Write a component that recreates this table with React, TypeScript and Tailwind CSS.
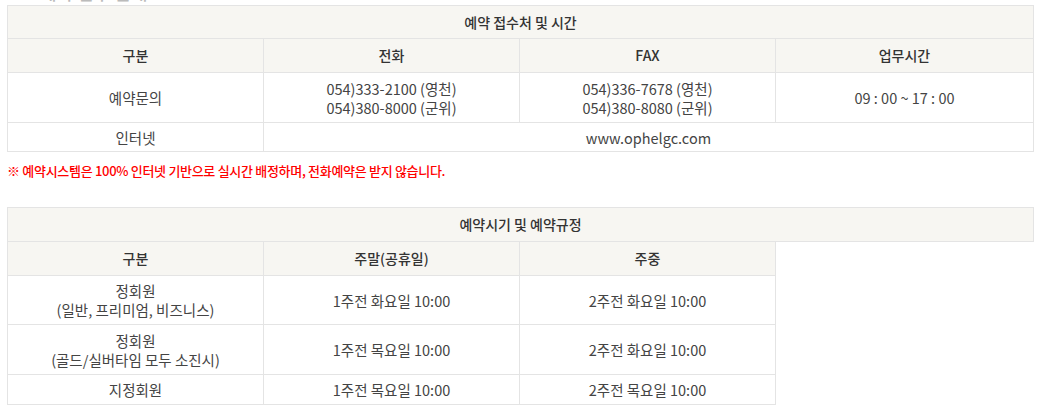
import React from "react";

const font = { fontFamily: '"Noto Sans CJK KR", "Noto Sans", sans-serif' };

const th = "border border-[#e4e4e4] bg-[#f7f6f2] text-[14px] font-medium text-[#333] text-center align-middle";
const td = "border border-[#e4e4e4] bg-white text-[14.5px] text-[#444] text-center align-middle leading-[19px]";

export default function App() {
  return (
    <div className="w-[1037px] h-[410px] overflow-hidden bg-white" style={font}>
      <div className="pl-[7px]">
        <div className="h-[5px] overflow-hidden">
          <div className="-mt-[18px] pl-[33px] text-[18px] leading-[20px] text-[#bbb] font-medium">예약 접수 안내</div>
        </div>
        <table className="w-[1026px] border-collapse table-fixed">
          <colgroup>
            <col className="w-[256px]" />
            <col className="w-[256px]" />
            <col className="w-[256px]" />
            <col className="w-[258px]" />
          </colgroup>
          <tbody>
            <tr className="h-[33px]">
              <th colSpan={4} className={th}>예약 접수처 및 시간</th>
            </tr>
            <tr className="h-[34px]">
              <th className={th}>구분</th>
              <th className={th}>전화</th>
              <th className={th}>FAX</th>
              <th className={th}>업무시간</th>
            </tr>
            <tr className="h-[50px]">
              <td className={td}>예약문의</td>
              <td className={td}>
                054)333-2100 (영천)
                <br />
                054)380-8000 (군위)
              </td>
              <td className={td}>
                054)336-7678 (영천)
                <br />
                054)380-8080 (군위)
              </td>
              <td className={td}>09 : 00 ~ 17 : 00</td>
            </tr>
            <tr className="h-[29px]">
              <td className={td}>인터넷</td>
              <td colSpan={3} className={td}>www.ophelgc.com</td>
            </tr>
          </tbody>
        </table>
        <p className="mt-[10px] text-[13px] leading-[18px] font-medium text-[#ff0000] tracking-[-0.3px]">
          ※ 예약시스템은 100% 인터넷 기반으로 실시간 배정하며, 전화예약은 받지 않습니다.
        </p>
        <table className="mt-[27px] w-[1026px] border-collapse table-fixed">
          <colgroup>
            <col className="w-[256px]" />
            <col className="w-[256px]" />
            <col className="w-[256px]" />
            <col className="w-[258px]" />
          </colgroup>
          <tbody>
            <tr className="h-[34px]">
              <th colSpan={4} className={th}>예약시기 및 예약규정</th>
            </tr>
            <tr className="h-[34px]">
              <th className={th}>구분</th>
              <th className={th}>주말(공휴일)</th>
              <th className={th}>주중</th>
              <td className="border-l border-[#e4e4e4]"></td>
            </tr>
            <tr className="h-[49px]">
              <td className={td}>
                정회원
                <br />
                (일반, 프리미엄, 비즈니스)
              </td>
              <td className={td}>1주전 화요일 10:00</td>
              <td className={td}>2주전 화요일 10:00</td>
              <td className="border-l border-[#e4e4e4]"></td>
            </tr>
            <tr className="h-[50px]">
              <td className={td}>
                정회원
                <br />
                (골드/실버타임 모두 소진시)
              </td>
              <td className={td}>1주전 목요일 10:00</td>
              <td className={td}>2주전 화요일 10:00</td>
              <td className="border-l border-[#e4e4e4]"></td>
            </tr>
            <tr className="h-[30px]">
              <td className={td}>지정회원</td>
              <td className={td}>1주전 목요일 10:00</td>
              <td className={td}>2주전 목요일 10:00</td>
              <td className="border-l border-[#e4e4e4]"></td>
            </tr>
          </tbody>
        </table>
      </div>
    </div>
  );
}
